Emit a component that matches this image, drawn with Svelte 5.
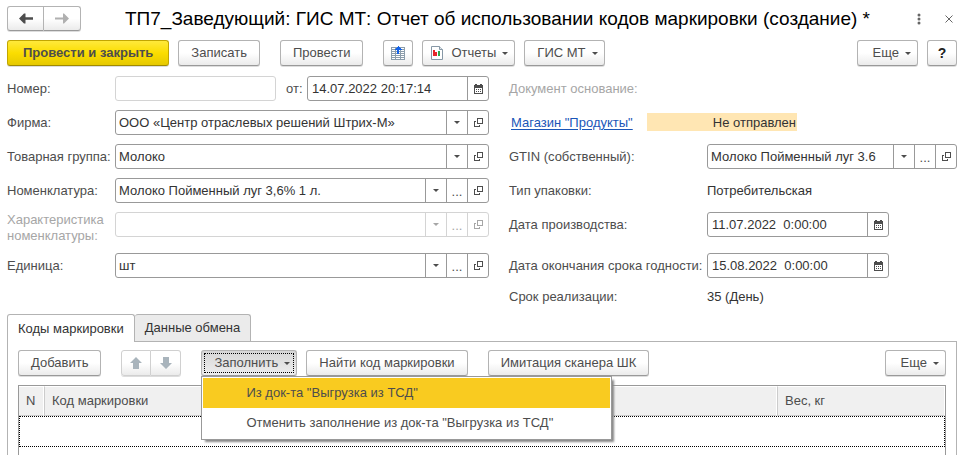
<script lang="ts">
  type Action = "list" | "more" | "open" | "calendar";

  let firm = $state("ООО «Центр отраслевых решений Штрих-М»");
  let docDate = $state("14.07.2022 20:17:14");
  let group = $state("Молоко");
  let item = $state("Молоко Пойменный луг 3,6% 1 л.");
  let unit = $state("шт");
  let gtin = $state("Молоко Пойменный луг 3.6");
  let madeAt = $state("11.07.2022  0:00:00");
  let expiresAt = $state("15.08.2022  0:00:00");

  let activeTab = $state(0);
  let menuOpen = $state(true);

  const tabs = ["Коды маркировки", "Данные обмена"];
  const menuItems = [
    'Из док-та "Выгрузка из ТСД"',
    'Отменить заполнение из док-та "Выгрузка из ТСД"'
  ];

  const actionLabels: Record<Action, string> = {
    list: "Выбрать из списка",
    more: "Показать все",
    open: "Открыть",
    calendar: "Календарь"
  };
</script>

{#snippet caret()}
  <svg class="caret" width="6" height="3" viewBox="0 0 6 3"><path d="M0 0h6L3 3z" fill="currentColor" /></svg>
{/snippet}

{#snippet actionIcon(action: Action)}
  {#if action === "list"}
    {@render caret()}
  {:else if action === "more"}
    <span>...</span>
  {:else if action === "open"}
    <svg width="9" height="9" viewBox="0 0 9 9" fill="none" stroke="currentColor" shape-rendering="crispEdges">
      <path d="M3.5 .5h5v5h-5zM2 3.5H.5v5h5V7" />
    </svg>
  {:else}
    <svg width="9" height="10" viewBox="0 0 9 10" fill="currentColor" shape-rendering="crispEdges">
      <path fill-rule="evenodd" d="M0 1h1V0h2v1h3V0h2v1h1v9H0zM1 4v5h7V4z" />
      <path d="M2 5h1v1H2zM4 5h1v1H4zM6 5h1v1H6zM2 7h1v1H2zM4 7h1v1H4zM6 7h1v1H6z" />
    </svg>
  {/if}
{/snippet}

{#snippet actions(list: Action[], disabled: boolean)}
  {#each list as action}
    <button type="button" class="field-btn" aria-label={actionLabels[action]} {disabled}>
      {@render actionIcon(action)}
    </button>
  {/each}
{/snippet}

<div class="form">
  <header class="title-bar">
    <div class="pair">
      <button type="button" class="btn" aria-label="Назад">
        <svg width="14" height="11" viewBox="0 0 14 11" fill="#4d4d4d"><path d="M0 5.5 5 .5h1.500v3.700H14v2.600H6.500v3.700H5z" /></svg>
      </button>
      <button type="button" class="btn" aria-label="Вперед">
        <svg width="14" height="11" viewBox="0 0 14 11" fill="#b0b0b0"><path d="M14 5.500 9 .5H8v4H0v2h8v4h1z" /></svg>
      </button>
    </div>
    <h1>ТП7_Заведующий: ГИС МТ: Отчет об использовании кодов маркировки (создание) *</h1>
    <button type="button" class="plain" aria-label="Меню окна">
      <svg width="4" height="12" viewBox="0 0 4 12" fill="#666"><circle cx="2" cy="2" r="1.500" /><circle cx="2" cy="6" r="1.500" /><circle cx="2" cy="10" r="1.500" /></svg>
    </button>
    <button type="button" class="plain" aria-label="Закрыть">
      <svg width="8" height="8" viewBox="0 0 8 8" stroke="#666"><path d="M.5 .5l7 7M7.500 .5l-7 7" /></svg>
    </button>
  </header>

  <div class="toolbar">
    <button type="button" class="btn primary">Провести и закрыть</button>
    <button type="button" class="btn">Записать</button>
    <button type="button" class="btn apart">Провести</button>
    <button type="button" class="btn icon apart" aria-label="Движения документа">
      <svg width="14" height="14" viewBox="0 0 14 14" shape-rendering="crispEdges">
        <path d="M0 1h14v13H0z" fill="#8c9dab" />
        <path d="M1 2h3v1H1zM5 2h4v1H5zM10 2h3v1h-3zM1 4h3v1H1zM5 4h4v1H5zM10 4h3v1h-3zM1 6h3v1H1zM5 6h4v1H5zM10 6h3v1h-3zM1 8h3v1H1zM5 8h4v1H5zM10 8h3v1h-3zM1 10h3v1H1zM5 10h4v1H5zM10 10h3v1h-3zM1 12h3v1H1zM5 12h4v1H5zM10 12h3v1h-3z" fill="#fff" />
        <path d="M7 0l4 4H8v4H6V4H3z" fill="#1463e8" />
      </svg>
    </button>
    <button type="button" class="btn drop reports">
      <svg width="12" height="14" viewBox="0 0 12 14">
        <path d="M.5 .5h8l3 3v10H.5z" fill="#fff" stroke="#8798a6" />
        <path d="M8.500 .5v3h3" fill="#dfe6eb" stroke="#8798a6" />
        <path d="M2 4h2v6H2z" fill="#e8262a" /><path d="M4 6h2v4H4z" fill="#e8262a" /><path d="M7 5h2v5H7z" fill="#2fa84f" />
      </svg>
      <span>Отчеты</span>
      {@render caret()}
    </button>
    <button type="button" class="btn drop">ГИС МТ {@render caret()}</button>
    <span class="spacer"></span>
    <button type="button" class="btn drop more">Еще {@render caret()}</button>
    <button type="button" class="btn icon help">?</button>
  </div>

  <div class="fields">
    <div class="row">
      <label for="number">Номер:</label>
      <div class="field disabled"><input id="number" disabled /></div>
      <label class="from" for="doc-date">от:</label>
      <div class="field date">
        <input id="doc-date" bind:value={docDate} />
        {@render actions(["calendar"], false)}
      </div>
    </div>
    <div class="row"><span class="muted">Документ основание:</span></div>

    <div class="row">
      <label for="firm">Фирма:</label>
      <div class="field">
        <input id="firm" bind:value={firm} />
        {@render actions(["list", "open"], false)}
      </div>
    </div>
    <div class="row">
      <span class="base"><a href="#base">Магазин "Продукты"</a></span>
      <span class="status">Не отправлен</span>
    </div>

    <div class="row">
      <label for="group">Товарная группа:</label>
      <div class="field">
        <input id="group" bind:value={group} />
        {@render actions(["list", "open"], false)}
      </div>
    </div>
    <div class="row right">
      <label for="gtin">GTIN (собственный):</label>
      <div class="field">
        <input id="gtin" bind:value={gtin} />
        {@render actions(["list", "more", "open"], false)}
      </div>
    </div>

    <div class="row">
      <label for="item">Номенклатура:</label>
      <div class="field">
        <input id="item" bind:value={item} />
        {@render actions(["list", "more", "open"], false)}
      </div>
    </div>
    <div class="row right">
      <span class="caption">Тип упаковки:</span>
      <span class="value">Потребительская</span>
    </div>

    <div class="row">
      <label class="muted" for="feature">Характеристика номенклатуры:</label>
      <div class="field disabled">
        <input id="feature" disabled />
        {@render actions(["list", "more", "open"], true)}
      </div>
    </div>
    <div class="row right">
      <label for="made-at">Дата производства:</label>
      <div class="field date">
        <input id="made-at" bind:value={madeAt} />
        {@render actions(["calendar"], false)}
      </div>
    </div>

    <div class="row">
      <label for="unit">Единица:</label>
      <div class="field">
        <input id="unit" bind:value={unit} />
        {@render actions(["list", "more", "open"], false)}
      </div>
    </div>
    <div class="row right">
      <label for="expires-at">Дата окончания срока годности:</label>
      <div class="field date">
        <input id="expires-at" bind:value={expiresAt} />
        {@render actions(["calendar"], false)}
      </div>
    </div>

    <div class="row right last">
      <span class="caption">Срок реализации:</span>
      <span class="value">35 (День)</span>
    </div>
  </div>

  <div class="tabs" role="tablist">
    {#each tabs as tab, i}
      <button
        type="button"
        role="tab"
        class="tab"
        class:active={activeTab === i}
        aria-selected={activeTab === i}
        onclick={() => (activeTab = i)}
      >{tab}</button>
    {/each}
  </div>

  <section class="panel">
    <div class="toolbar">
      <button type="button" class="btn">Добавить</button>
      <div class="pair apart faded">
        <button type="button" class="btn" aria-label="Переместить вверх" disabled>
          <svg width="12" height="12" viewBox="0 0 12 12"><path d="M6 0l6 6H9v6H3V6H0z" fill="#a9b4bc" /></svg>
        </button>
        <button type="button" class="btn" aria-label="Переместить вниз" disabled>
          <svg width="12" height="12" viewBox="0 0 12 12"><path d="M6 12L0 6h3V0h6v6h3z" fill="#a9b4bc" /></svg>
        </button>
      </div>
      <div class="menu-anchor apart">
        <button
          type="button"
          class="btn drop"
          class:pressed={menuOpen}
          aria-haspopup="menu"
          aria-expanded={menuOpen}
          onclick={() => (menuOpen = !menuOpen)}
        >Заполнить {@render caret()}</button>
        {#if menuOpen}
          <div class="menu" role="menu">
            {#each menuItems as entry, i}
              <button type="button" role="menuitem" class="menu-item" class:current={i === 0} onclick={() => (menuOpen = false)}>{entry}</button>
            {/each}
          </div>
        {/if}
      </div>
      <button type="button" class="btn">Найти код маркировки</button>
      <button type="button" class="btn apart">Имитация сканера ШК</button>
      <span class="spacer"></span>
      <button type="button" class="btn drop more">Еще {@render caret()}</button>
    </div>

    <div class="grid">
      <table>
        <thead>
          <tr><th class="num">N</th><th>Код маркировки</th><th class="weight">Вес, кг</th></tr>
        </thead>
        <tbody>
          <tr><td colspan="3"></td></tr>
        </tbody>
      </table>
    </div>
  </section>
</div>

<style>
  :global(body) {
    background: #fff;
  }

  .form {
    display: flex;
    flex-direction: column;
    min-height: 100vh;
    box-sizing: border-box;
    padding: 6px 6px 0 7px;
    font: 13px/16px "Liberation Sans", Arial, sans-serif;
    color: #4d4d4d;
  }

  button,
  input {
    box-sizing: border-box;
    margin: 0;
    font: inherit;
    color: inherit;
  }

  svg {
    display: block;
    flex: none;
  }

  .title-bar {
    display: flex;
    align-items: center;
    height: 25px;
    margin-bottom: 9px;
  }

  h1 {
    flex: 1;
    min-width: 0;
    margin: 0 0 0 44px;
    font-size: 19px;
    line-height: 24px;
    font-weight: 400;
    color: #000;
    white-space: nowrap;
  }

  .plain {
    display: flex;
    align-items: center;
    justify-content: center;
    width: 16px;
    height: 24px;
    margin-left: 14px;
    padding: 0;
    border: 0;
    background: none;
  }

  /* Кнопки */
  .btn {
    display: inline-flex;
    align-items: center;
    justify-content: center;
    height: 26px;
    padding: 0 12px;
    border: 1px solid #b3b3b3;
    border-bottom-color: #999;
    border-radius: 3px;
    background: linear-gradient(#fff 50%, #ebebeb);
    box-shadow: 0 1px 0 #ddd;
    white-space: nowrap;
  }

  .primary {
    padding: 0 15px;
    border-color: #c2a600;
    border-bottom-color: #a08a00;
    background: linear-gradient(#ffe93b, #fbdd00 50%, #e6c900);
    font-weight: 700;
  }

  .drop {
    gap: 6px;
    padding-right: 6px;
  }

  .more {
    padding-left: 15px;
  }

  .reports {
    padding-left: 8px;
  }

  .reports span {
    margin-left: 2px;
  }

  .icon {
    width: 30px;
    padding: 0;
  }

  .help {
    font-size: 14px;
    font-weight: 700;
    color: #222;
  }

  .pressed {
    background: linear-gradient(#d6d6d6, #eee);
    outline: 1px dotted #000;
    outline-offset: -4px;
  }

  .pair {
    display: flex;
  }

  .pair .btn {
    width: 37px;
    height: 25px;
    padding: 0;
  }

  .pair .btn:first-child {
    border-radius: 3px 0 0 3px;
  }

  .pair .btn:last-child {
    border-left-width: 0;
    border-radius: 0 3px 3px 0;
  }

  .faded .btn {
    width: 30px;
    height: 26px;
    border-color: #d0d0d0;
  }

  .toolbar {
    display: flex;
    gap: 9px;
  }

  .apart {
    margin-left: 11px;
  }

  .spacer {
    flex: 1;
  }

  /* Реквизиты */
  .fields {
    display: grid;
    grid-template-columns: 482fr 448fr;
    gap: 9px 20px;
    margin-top: 10px;
  }

  .row {
    display: flex;
    align-items: flex-start;
    min-width: 0;
  }

  .row label,
  .row .caption {
    flex: none;
    width: 108px;
    padding-top: 5px;
    white-space: nowrap;
  }

  .row label.muted {
    padding-top: 0;
    white-space: normal;
  }

  .row.right label,
  .row.right .caption {
    width: 198px;
  }

  .row label.from {
    width: 31px;
    padding-left: 10px;
    box-sizing: border-box;
  }

  .row span {
    padding-top: 5px;
  }

  .last {
    grid-column: 2;
    height: 20px;
  }

  .row.last span {
    padding-top: 2px;
  }

  .muted {
    color: #a6a6a6;
  }

  .value {
    color: #333;
  }

  .field {
    display: flex;
    flex: 1;
    min-width: 0;
    height: 25px;
    box-sizing: border-box;
    border: 1px solid #999;
    border-radius: 3px;
    background: #fff;
  }

  .field.date {
    flex: none;
    width: 182px;
  }

  .field input {
    flex: 1;
    width: 0;
    min-width: 0;
    padding: 0 3px;
    border: 0;
    outline: 0;
    background: none;
    color: #333;
  }

  .date input {
    padding-left: 4px;
  }

  .field-btn {
    display: flex;
    align-items: center;
    justify-content: center;
    width: 21px;
    padding: 0;
    border: 0;
    border-left: 1px solid #999;
    background: none;
    color: #4d4d4d;
  }

  .row .field-btn span {
    padding-top: 3px;
  }

  .field.disabled,
  .disabled .field-btn {
    border-color: #d4d4d4;
  }

  .disabled .field-btn {
    color: #a6a6a6;
  }

  .base {
    flex: none;
    width: 136px;
    padding-left: 2px;
  }

  a {
    color: #1a56b8;
    text-underline-offset: 2px;
  }

  .row .status {
    width: 150px;
    box-sizing: border-box;
    margin-top: 3px;
    padding: 2px 1px 0 0;
    background: #ffe6b3;
    color: #333;
    text-align: right;
  }

  /* Закладки */
  .tabs {
    display: flex;
    margin-top: 7px;
  }

  .tab {
    height: 27px;
    padding: 0 10px;
    border: 1px solid #b3b3b3;
    border-bottom: 0;
    border-left-width: 0;
    border-radius: 3px 3px 0 0;
    background: #ebebeb;
    color: #333;
  }

  .tab:first-child {
    border-left-width: 1px;
  }

  .tab.active {
    z-index: 1;
    height: 28px;
    margin-bottom: -1px;
    background: #fff;
  }

  .panel {
    display: flex;
    flex: 1;
    flex-direction: column;
    padding: 8px 10px 0;
    border: 1px solid #b3b3b3;
    border-bottom: 0;
  }

  .menu-anchor {
    position: relative;
  }

  .menu {
    position: absolute;
    top: 26px;
    left: 0;
    z-index: 2;
    width: 411px;
    box-sizing: border-box;
    padding: 1px;
    border: 1px solid #999;
    background: #fff;
    box-shadow: 3px 3px 2px -1px #888;
  }

  .menu-item {
    display: block;
    width: 100%;
    height: 30px;
    padding: 0 43px;
    border: 0;
    background: none;
    text-align: left;
    white-space: nowrap;
  }

  .menu-item.current {
    background: #f9cb20;
  }

  /* Табличная часть */
  .grid {
    flex: 1;
    margin-top: 9px;
    border: 1px solid #999;
    border-bottom: 0;
  }

  table {
    width: 100%;
    border-collapse: separate;
    border-spacing: 0;
    table-layout: fixed;
  }

  th {
    height: 30px;
    box-sizing: border-box;
    padding: 0 7px;
    border: 1px solid #fff;
    border-width: 1px 1px 0 0;
    border-bottom: 1px solid #ccc;
    background: #f0f0f0;
    font-weight: 400;
    text-align: left;
  }

  th + th {
    border-left: 1px solid #ccc;
  }

  .num {
    width: 25px;
  }

  .weight {
    width: 168px;
  }

  td {
    height: 31px;
    box-sizing: border-box;
    padding: 0;
    border: 1px dotted #000;
  }
</style>
